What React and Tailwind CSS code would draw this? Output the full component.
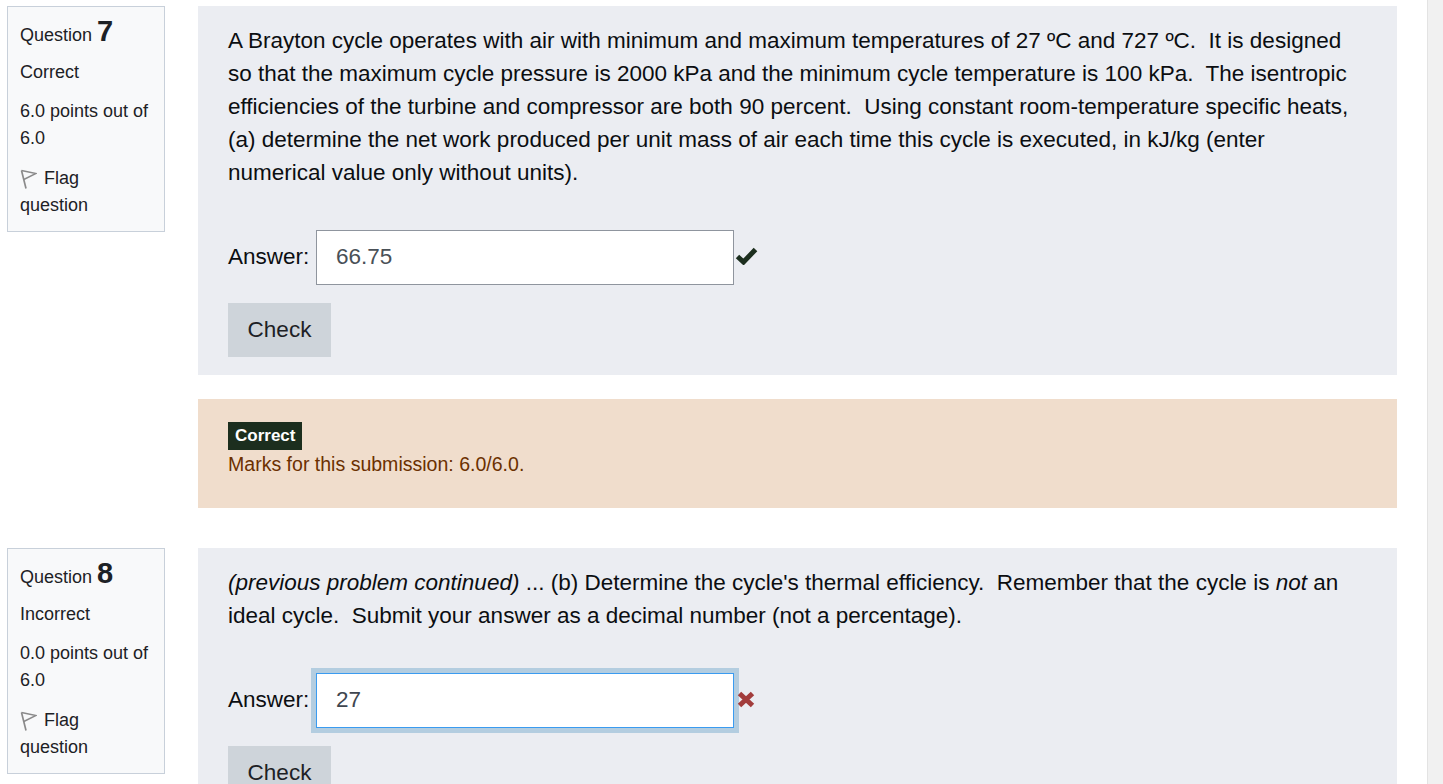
import React from "react";

const FlagIcon = () => (
  <svg width="17" height="20" viewBox="0 0 17 20" fill="none" className="shrink-0">
    <path d="M1.5 1.5 L6 19.5" stroke="#8a8a8a" strokeWidth="1.7" />
    <path d="M1.5 1.5 L16 4.5 L3.8 10.5" stroke="#8a8a8a" strokeWidth="1.4" />
  </svg>
);

const CheckIcon = () => (
  <svg width="23" height="18" viewBox="0 0 23 18" className="ml-[1px] mb-[4px] shrink-0">
    <path d="M2.5 9.5 L8.5 15 L20.5 2.5" fill="none" stroke="#1c2e1e" strokeWidth="5" />
  </svg>
);

const TimesIcon = () => (
  <svg width="18" height="17" viewBox="0 0 18 17" className="ml-[3px] mb-[2px] shrink-0">
    <path d="M2.5 2.5 L15.5 14.5 M15.5 2.5 L2.5 14.5" fill="none" stroke="#a23c3c" strokeWidth="5" />
  </svg>
);

function Info({ n, state, points }) {
  return (
    <div className="w-[158px] h-[226px] shrink-0 border border-[#c8d0da] bg-[#f8f9fa] px-3 pt-[7px] text-[18px] leading-[27px] text-[#1d2125]">
      <div className="h-[36px] flex items-baseline gap-[5px]">
        <span>Question</span>
        <span className="text-[29px] font-bold leading-[34px]">{n}</span>
      </div>
      <div className="mt-[9px]">{state}</div>
      <div className="mt-[12px]">{points} points out of 6.0</div>
      <div className="mt-[13px] flex items-center gap-[7px]">
        <FlagIcon />
        <span>Flag</span>
      </div>
      <div>question</div>
    </div>
  );
}

function AnswerRow({ value, focused, icon }) {
  return (
    <div className="mt-[41px] flex items-center h-[55px]">
      <span className="w-[88px] shrink-0 pb-[2px] text-[#0b0e11]">Answer:</span>
      <div
        className={
          focused
            ? "w-[418px] h-[55px] px-[19px] pb-[2px] flex items-center bg-white border border-[#3a9bf0] outline-[5px] outline-[#b3cde0] text-[#3f4650]"
            : "w-[418px] h-[55px] px-[19px] pb-[2px] flex items-center bg-white border border-[#8f959e] text-[#495057]"
        }
      >
        {value}
      </div>
      {icon}
    </div>
  );
}

const CheckButton = () => (
  <button className="mt-[18px] block w-[103px] h-[54px] pb-[2px] bg-[#ced4da] text-[#1d2125]">Check</button>
);

export default function App() {
  return (
    <div className="h-[784px] overflow-hidden flex bg-white font-['Liberation_Sans',Arial,sans-serif]">
      <main className="flex-1 min-w-0 pl-[7px] pt-[6px]">
        <section className="flex">
          <Info n="7" state="Correct" points="6.0" />
          <div className="ml-[33px] w-[1199px] text-[22.5px] leading-[33px] text-[#0b0e11]">
            <div className="h-[369px] bg-[#ebedf2] px-[30px] pt-[18px]">
              <p>
                A Brayton cycle operates with air with minimum and maximum temperatures of 27 ºC and 727 ºC.&nbsp; It is
                designed so that the maximum cycle pressure is 2000 kPa and the minimum cycle temperature is 100 kPa.&nbsp;
                The isentropic efficiencies of the turbine and compressor are both 90 percent.&nbsp; Using constant
                room-temperature specific heats, (a) determine the net work produced per unit mass of air each time this
                cycle is executed, in kJ/kg (enter numerical value only without units).
              </p>
              <AnswerRow value="66.75" icon={<CheckIcon />} />
              <CheckButton />
            </div>
            <div className="mt-[24px] h-[109px] bg-[#f0ddcc] px-[30px] pt-[23px] text-[19.55px] leading-[28px] text-[#6b3000]">
              <span className="block w-fit h-[28px] bg-[#1c2e1e] px-[7px] text-[17px] leading-[27px] font-bold text-white">
                Correct
              </span>
              <div>Marks for this submission: 6.0/6.0.</div>
            </div>
          </div>
        </section>
        <section className="flex mt-[40px]">
          <Info n="8" state="Incorrect" points="0.0" />
          <div className="ml-[33px] w-[1199px] text-[22.5px] leading-[33px] text-[#0b0e11]">
            <div className="h-[369px] bg-[#ebedf2] px-[30px] pt-[18px]">
              <p>
                <em>(previous problem continued)</em> ... (b) Determine the cycle's thermal efficiency.&nbsp; Remember that
                the cycle is <em>not</em> an ideal cycle.&nbsp; Submit your answer as a decimal number (not a percentage).
              </p>
              <AnswerRow value="27" focused icon={<TimesIcon />} />
              <CheckButton />
            </div>
          </div>
        </section>
      </main>
      <div className="w-[16px] shrink-0 bg-[#f1f1f1] border-l border-[#e3e3e3]" />
    </div>
  );
}
